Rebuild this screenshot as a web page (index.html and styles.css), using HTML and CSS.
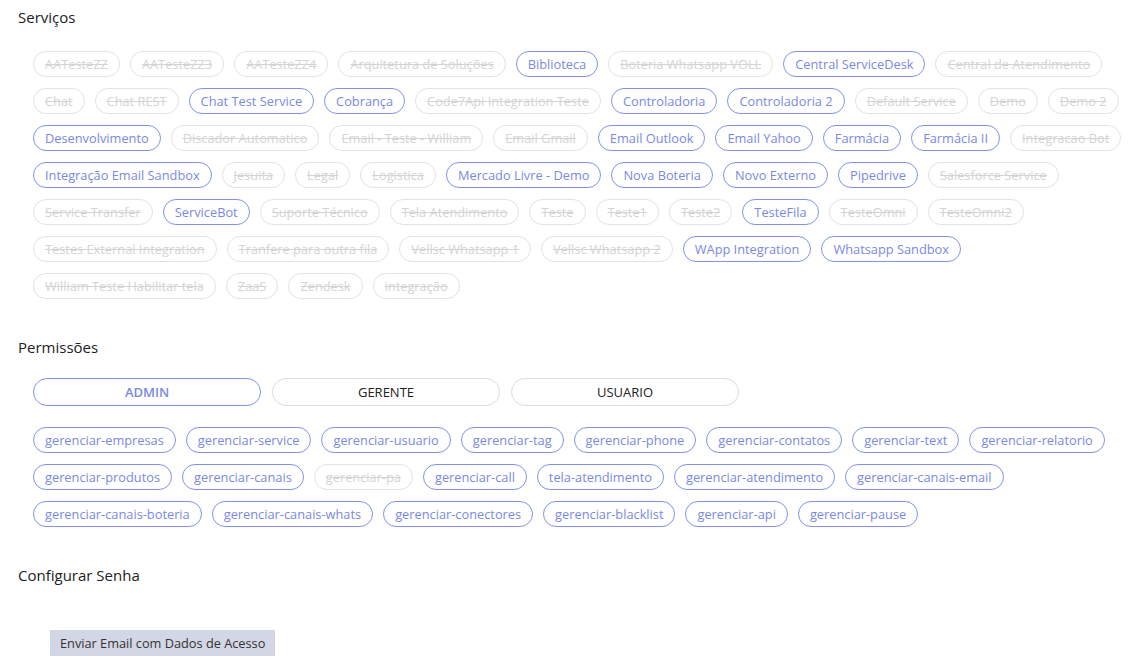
FILE: index.html
```html
<!DOCTYPE html>
<html lang="pt">
<head>
<meta charset="utf-8">
<title>Usuário</title>
<link rel="stylesheet" href="styles.css">
</head>
<body>
<div class="page">
  <h2 class="section-title">Serviços</h2>
  <div class="chips">
    <div class="chip-row">
      <span class="chip off">AATesteZZ</span>
      <span class="chip off">AATesteZZ3</span>
      <span class="chip off">AATesteZZ4</span>
      <span class="chip off">Arquitetura de Soluções</span>
      <span class="chip on">Biblioteca</span>
      <span class="chip off">Boteria Whatsapp VOLL</span>
      <span class="chip on">Central ServiceDesk</span>
      <span class="chip off">Central de Atendimento</span>
    </div>
    <div class="chip-row">
      <span class="chip off">Chat</span>
      <span class="chip off">Chat REST</span>
      <span class="chip on">Chat Test Service</span>
      <span class="chip on">Cobrança</span>
      <span class="chip off">Code7Api Integration Teste</span>
      <span class="chip on">Controladoria</span>
      <span class="chip on">Controladoria 2</span>
      <span class="chip off">Default Service</span>
      <span class="chip off">Demo</span>
      <span class="chip off">Demo 2</span>
    </div>
    <div class="chip-row">
      <span class="chip on">Desenvolvimento</span>
      <span class="chip off">Discador Automatico</span>
      <span class="chip off">Email - Teste - William</span>
      <span class="chip off">Email Gmail</span>
      <span class="chip on">Email Outlook</span>
      <span class="chip on">Email Yahoo</span>
      <span class="chip on">Farmácia</span>
      <span class="chip on">Farmácia II</span>
      <span class="chip off">Integracao Bot</span>
    </div>
    <div class="chip-row">
      <span class="chip on">Integração Email Sandbox</span>
      <span class="chip off">Jesuita</span>
      <span class="chip off">Legal</span>
      <span class="chip off">Logistica</span>
      <span class="chip on">Mercado Livre - Demo</span>
      <span class="chip on">Nova Boteria</span>
      <span class="chip on">Novo Externo</span>
      <span class="chip on">Pipedrive</span>
      <span class="chip off">Salesforce Service</span>
    </div>
    <div class="chip-row">
      <span class="chip off">Service Transfer</span>
      <span class="chip on">ServiceBot</span>
      <span class="chip off">Suporte Técnico</span>
      <span class="chip off">Tela Atendimento</span>
      <span class="chip off">Teste</span>
      <span class="chip off">Teste1</span>
      <span class="chip off">Teste2</span>
      <span class="chip on">TesteFila</span>
      <span class="chip off">TesteOmni</span>
      <span class="chip off">TesteOmni2</span>
    </div>
    <div class="chip-row">
      <span class="chip off">Testes External Integration</span>
      <span class="chip off">Tranfere para outra fila</span>
      <span class="chip off">Vellsc Whatsapp 1</span>
      <span class="chip off">Vellsc Whatsapp 2</span>
      <span class="chip on">WApp Integration</span>
      <span class="chip on">Whatsapp Sandbox</span>
    </div>
    <div class="chip-row">
      <span class="chip off">William Teste Habilitar tela</span>
      <span class="chip off">ZaaS</span>
      <span class="chip off">Zendesk</span>
      <span class="chip off">integração</span>
    </div>
  </div>

  <h2 class="section-title perm-title">Permissões</h2>
  <div class="roles">
    <button class="role active">ADMIN</button>
    <button class="role">GERENTE</button>
    <button class="role">USUARIO</button>
  </div>
  <div class="chips perm-chips">
    <div class="chip-row">
      <span class="chip on">gerenciar-empresas</span>
      <span class="chip on">gerenciar-service</span>
      <span class="chip on">gerenciar-usuario</span>
      <span class="chip on">gerenciar-tag</span>
      <span class="chip on">gerenciar-phone</span>
      <span class="chip on">gerenciar-contatos</span>
      <span class="chip on">gerenciar-text</span>
      <span class="chip on">gerenciar-relatorio</span>
    </div>
    <div class="chip-row">
      <span class="chip on">gerenciar-produtos</span>
      <span class="chip on">gerenciar-canais</span>
      <span class="chip off">gerenciar-pa</span>
      <span class="chip on">gerenciar-call</span>
      <span class="chip on">tela-atendimento</span>
      <span class="chip on">gerenciar-atendimento</span>
      <span class="chip on">gerenciar-canais-email</span>
    </div>
    <div class="chip-row">
      <span class="chip on">gerenciar-canais-boteria</span>
      <span class="chip on">gerenciar-canais-whats</span>
      <span class="chip on">gerenciar-conectores</span>
      <span class="chip on">gerenciar-blacklist</span>
      <span class="chip on">gerenciar-api</span>
      <span class="chip on">gerenciar-pause</span>
    </div>
  </div>

  <h2 class="section-title pass-title">Configurar Senha</h2>
  <div class="pass-actions">
    <button class="send-btn">Enviar Email com Dados de Acesso</button>
  </div>
</div>
</body>
</html>
```

FILE: styles.css
```css
html, body {
  margin: 0;
  padding: 0;
  background: #ffffff;
}

body {
  font-family: "Open Sans", "Noto Sans", "Liberation Sans", sans-serif;
  color: #222;
}

.page {
  padding: 6px 18px;
}

.section-title {
  margin: 0;
  font-size: 15px;
  font-weight: 400;
  line-height: 22px;
  color: #222;
}

.chips {
  margin-top: 23px;
  padding-left: 15px;
  display: flex;
  flex-direction: column;
  gap: 11px;
}

.chip-row {
  display: flex;
  gap: 10px;
}

.chip {
  box-sizing: border-box;
  height: 26px;
  line-height: 24px;
  padding: 0 11px;
  border-radius: 13px;
  font-size: 12.8px;
  white-space: nowrap;
  border: 1px solid;
}

.chip.on {
  color: #7a89e4;
  border-color: #8292ec;
}

.chip.off {
  color: #d4d4d4;
  border-color: #e2e2e2;
  text-decoration: line-through;
}

.perm-title {
  margin-top: 37px;
}

.roles {
  margin-top: 20px;
  padding-left: 15px;
  display: flex;
  gap: 11px;
}

.role {
  box-sizing: border-box;
  width: 228px;
  height: 28px;
  border-radius: 14px;
  border: 1px solid #dcdcdc;
  background: #fff;
  font-family: inherit;
  font-size: 13px;
  color: #222;
  padding: 0;
}

.role.active {
  border-color: #8292ec;
  color: #7a89e4;
  font-weight: 600;
}

.perm-chips {
  margin-top: 21px;
}

.pass-title {
  margin-top: 37px;
}

.pass-actions {
  margin-top: 44px;
  padding-left: 32px;
}

.send-btn {
  height: 26px;
  padding: 0 10px;
  border: none;
  border-radius: 0;
  background: #d3d6e4;
  color: #333;
  font-family: inherit;
  font-size: 12.75px;
}
```
